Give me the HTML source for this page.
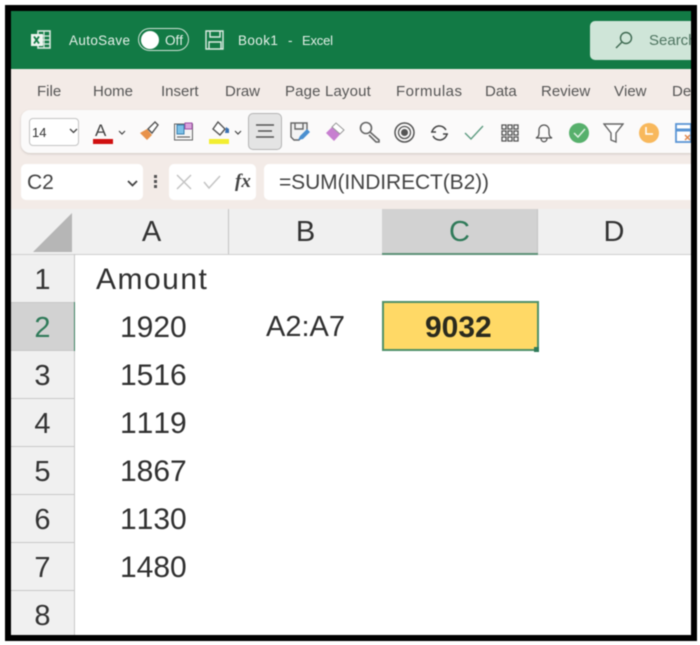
<!DOCTYPE html>
<html><head><meta charset="utf-8">
<style>
html,body{margin:0;padding:0;background:#fff}
#p{position:relative;width:700px;height:645px;overflow:hidden;background:#fff;font-family:"Liberation Sans",sans-serif;font-kerning:none;filter:blur(0.45px)}
#p div,#p span,#p svg{position:absolute}
.t{white-space:nowrap;line-height:1}
.m{font-size:15px;color:#555;top:84px}
.g{font-size:30px;color:#303030;line-height:1;white-space:nowrap}
.rh{left:11px;width:63px;height:47px;background:#f0f0f0;border-bottom:1px solid #c8c8c8;text-align:center;font-size:29px;line-height:50px;color:#333}
.ch{top:209px;height:45px;background:#f0f0f0;text-align:center;font-size:29px;line-height:46px;color:#333}
</style></head><body>
<div id="p">
<!-- green title bar -->
<div style="left:11px;top:11px;width:680px;height:58px;background:#127a45"></div>
<!-- ribbon bg -->
<div style="left:11px;top:69px;width:680px;height:141px;background:#f3ebe7"></div>

<svg style="left:30px;top:30px" width="22" height="20" viewBox="0 0 22 20"><rect x="8" y="1" width="12" height="17" fill="none" stroke="#d8e8de" stroke-width="1.6"/><path d="M14 1v17M8 6h12M8 10h12M8 14h12" stroke="#d8e8de" stroke-width="1.2"/><rect x="1" y="4" width="12" height="12" fill="#eef5f0"/><path d="M4 6.500l5 7M9 6.500l-5 7" stroke="#127a45" stroke-width="1.800"/></svg>
<span class="t" style="left:69px;top:34px;font-size:13.5px;color:#e4f0e8;letter-spacing:.35px">AutoSave</span>
<div style="left:138px;top:28px;width:51px;height:23px;border:1px solid #cfe3d6;border-radius:13px;box-sizing:border-box"></div>
<div style="left:141px;top:31px;width:18px;height:18px;background:#fff;border-radius:50%"></div>
<span class="t" style="left:165px;top:34px;font-size:13.5px;color:#e4f0e8">Off</span>
<svg style="left:204px;top:29px" width="22" height="22" viewBox="0 0 22 22" fill="none" stroke="#dcebe2" stroke-width="1.400"><path d="M2 2h17v18H2zM6 2v6h10V2M5 20v-7h12v7"/></svg>
<span class="t" style="left:238px;top:34px;font-size:13.5px;color:#e4f0e8;letter-spacing:.4px">Book1</span>
<span class="t" style="left:288px;top:34px;font-size:13.5px;color:#e4f0e8">-</span>
<span class="t" style="left:302px;top:34px;font-size:13px;color:#e4f0e8;letter-spacing:-.2px">Excel</span>
<div style="left:590px;top:21px;width:101px;height:39px;background:#cfe5d8;border-radius:5px 0 0 5px"></div>
<svg style="left:614px;top:30px" width="20" height="20" viewBox="0 0 20 20" fill="none" stroke="#3f6a52" stroke-width="1.400"><circle cx="12" cy="8" r="5.500"/><path d="M8 12l-6 6"/></svg>
<span class="t" style="left:649px;top:33px;font-size:15px;color:#4f7561;width:42px;overflow:hidden;display:block">Search</span>

<!-- tabs -->
<span class="t m" style="left:37px">File</span>
<span class="t m" style="left:93px">Home</span>
<span class="t m" style="left:161px">Insert</span>
<span class="t m" style="left:225px">Draw</span>
<span class="t m" style="left:285px;letter-spacing:.15px">Page Layout</span>
<span class="t m" style="left:396px;letter-spacing:.5px">Formulas</span>
<span class="t m" style="left:485px">Data</span>
<span class="t m" style="left:541px">Review</span>
<span class="t m" style="left:614px">View</span>
<span class="t m" style="left:672px;width:19px;overflow:hidden;display:block">Developer</span>

<!-- toolbar -->
<div style="left:21px;top:110px;width:670px;height:43px;background:#fbfafa;border-radius:9px 0 0 9px;box-shadow:0 1px 2px #cfc8c4"></div>
<div style="left:29px;top:118px;width:50px;height:28px;border:1px solid #c4c4c4;border-radius:4px;background:#fff;box-sizing:border-box"></div>
<span class="t" style="left:32px;top:126px;font-size:13px;color:#333">14</span>
<svg style="left:69px;top:128px" width="9" height="6" viewBox="0 0 9 6" fill="none" stroke="#444" stroke-width="1.300"><path d="M1 1l3.500 3.500L8 1"/></svg>
<span class="t" style="left:95px;top:122px;font-size:17px;color:#444">A</span>
<div style="left:93px;top:139px;width:20px;height:5px;background:#d01010"></div>
<svg style="left:118px;top:130px" width="8" height="6" viewBox="0 0 8 6" fill="none" stroke="#444" stroke-width="1.200"><path d="M1 1l3 3 3-3"/></svg>
<svg style="left:139px;top:120px" width="20" height="22" viewBox="0 0 20 22"><path d="M1 13l7-4 5 6-5 5z" fill="#e8924a"/><path d="M9 9l7-7 3 3-6 8z" fill="#fff" stroke="#555" stroke-width="1.400"/></svg>
<svg style="left:173px;top:122px" width="22" height="20" viewBox="0 0 22 20"><rect x="1.500" y="2" width="18" height="16" fill="#f4f4f4" stroke="#666"/><rect x="4" y="3" width="7" height="9" fill="#7cc0e8" stroke="#3a80b0"/><rect x="12" y="1" width="7" height="6" fill="#dba4dc" stroke="#a050a8"/><path d="M4 15h13" stroke="#555"/></svg>
<svg style="left:211px;top:121px" width="20" height="17" viewBox="0 0 20 17"><path d="M7 1l7 7-5 6-7-6z" fill="#fff" stroke="#555" stroke-width="1.400"/><path d="M15 6l3 2v4h-4z" fill="#3a70b0"/></svg>
<div style="left:209px;top:139px;width:20px;height:5px;background:#f2ee30"></div>
<svg style="left:234px;top:130px" width="8" height="6" viewBox="0 0 8 6" fill="none" stroke="#444" stroke-width="1.200"><path d="M1 1l3 3 3-3"/></svg>
<div style="left:248px;top:113px;width:34px;height:37px;background:#e4e4e4;border:1px solid #b4b4b4;border-radius:5px;box-sizing:border-box"></div>
<svg style="left:255px;top:123px" width="20" height="17" viewBox="0 0 20 17" stroke="#555" stroke-width="1.500"><path d="M1 2h18M3 8h14M1 14h18"/></svg>
<svg style="left:289px;top:121px" width="22" height="22" viewBox="0 0 22 22"><path d="M2 2h16v8l-8 9H5l-3-3z" fill="#f4f4f4" stroke="#666" stroke-width="1.400"/><path d="M6 2v6h8V2" fill="none" stroke="#666" stroke-width="1.400"/><path d="M9 19l2-4 7-7 3 3-7 7z" fill="#4a8fd0"/></svg>
<svg style="left:325px;top:122px" width="20" height="20" viewBox="0 0 20 20"><path d="M1 11l10-10 8 7-10 11z" fill="#c77fd0"/><path d="M7 5l4-4 8 7-4 4z" fill="#fff" stroke="#999"/></svg>
<svg style="left:359px;top:121px" width="22" height="22" viewBox="0 0 22 22" fill="none" stroke="#666" stroke-width="1.600"><circle cx="7" cy="7" r="5.500"/><path d="M11 11l9 8v2h-3l-7-7"/></svg>
<svg style="left:394px;top:122px" width="21" height="21" viewBox="0 0 21 21" fill="none" stroke="#555"><circle cx="10.500" cy="10.500" r="9.500" stroke-width="1.500"/><circle cx="10.500" cy="10.500" r="6" stroke-width="1.300"/><circle cx="10.500" cy="10.500" r="3" fill="#555"/></svg>
<svg style="left:430px;top:124px" width="19" height="18" viewBox="0 0 19 18" fill="none" stroke="#444" stroke-width="1.500"><path d="M2 8a7.500 7.500 0 0 1 14-2M17 10a7.500 7.500 0 0 1-14 2"/><path d="M1 8h5M13 10h5"/></svg>
<svg style="left:464px;top:125px" width="20" height="16" viewBox="0 0 20 16" fill="none" stroke="#5f9c82" stroke-width="1.400"><path d="M1 8l6 6L19 1"/></svg>
<svg style="left:501px;top:124px" width="18" height="18" viewBox="0 0 18 18" fill="#fff" stroke="#555" stroke-width="1.300"><path d="M1 1h4v4H1zM7 1h4v4H7zM13 1h4v4h-4zM1 7h4v4H1zM7 7h4v4H7zM13 7h4v4h-4zM1 13h4v4H1zM7 13h4v4H7zM13 13h4v4h-4z"/></svg>
<svg style="left:535px;top:123px" width="18" height="20" viewBox="0 0 18 20" fill="none" stroke="#555" stroke-width="1.300"><path d="M1 15c2-1 3-2 3-5V7a5 5 0 0 1 10 0v3c0 3 1 4 3 5zM6 15c0 5 6 5 6 0"/></svg>
<div style="left:569px;top:123px;width:20px;height:20px;background:#57b06c;border-radius:50%"></div>
<svg style="left:573px;top:128px" width="13" height="10" viewBox="0 0 13 10" fill="none" stroke="#dff0e2" stroke-width="1.500"><path d="M1 5l4 4 7-8"/></svg>
<svg style="left:603px;top:123px" width="21" height="21" viewBox="0 0 21 21" fill="#fff" stroke="#666" stroke-width="1.400"><path d="M1 1h19l-7 9v9l-5-2v-7z"/></svg>
<div style="left:639px;top:123px;width:20px;height:20px;background:#f8b85c;border-radius:50%"></div>
<svg style="left:643px;top:127px" width="11" height="10" viewBox="0 0 11 10" fill="none" stroke="#fff" stroke-width="1.500"><path d="M3 0v7h7"/></svg>
<svg style="left:675px;top:123px" width="16" height="20" viewBox="0 0 16 20"><rect x="1" y="1" width="15" height="18" fill="#fff" stroke="#5a95d5" stroke-width="1.800"/><path d="M1 7h15" stroke="#5a95d5" stroke-width="3"/><path d="M10 12l5 5M15 12l-5 5" stroke="#e08a50" stroke-width="1.500"/></svg>

<!-- formula bar -->
<div style="left:21px;top:164px;width:122px;height:36px;background:#fff;border-radius:5px"></div>
<span class="t" style="left:27px;top:172px;font-size:21px;color:#444">C2</span>
<svg style="left:127px;top:180px" width="11" height="7" viewBox="0 0 11 7" fill="none" stroke="#444" stroke-width="1.800"><path d="M1 1l4.500 4.500L10 1"/></svg>
<svg style="left:153px;top:174px" width="5" height="16" viewBox="0 0 5 16" fill="#555"><rect x="1" y="1" width="3" height="3"/><rect x="1" y="6" width="3" height="3"/><rect x="1" y="11" width="3" height="3"/></svg>
<div style="left:169px;top:164px;width:87px;height:36px;background:#fff;border-radius:5px"></div>
<svg style="left:176px;top:174px" width="16" height="16" viewBox="0 0 16 16" stroke="#c4c4c4" stroke-width="1.500"><path d="M1 1l14 14M15 1L1 15"/></svg>
<svg style="left:203px;top:175px" width="18" height="14" viewBox="0 0 18 14" fill="none" stroke="#c4c4c4" stroke-width="1.500"><path d="M1 7l5 6L17 1"/></svg>
<span class="t" style="left:235px;top:172px;font-size:19px;font-style:italic;font-family:'Liberation Serif',serif;color:#444;font-weight:bold">fx</span>
<div style="left:264px;top:164px;width:427px;height:36px;background:#fff;border-radius:5px 0 0 5px"></div>
<span class="t" style="left:279px;top:172px;font-size:21px;color:#444;letter-spacing:-.1px">=SUM(INDIRECT(B2))</span>

<!-- grid -->
<div style="left:11px;top:209px;width:680px;height:427px;background:#fff"></div>
<div style="left:11px;top:209px;width:64px;height:45px;background:#f0f0f0"></div>
<svg style="left:33px;top:213px" width="40" height="40" viewBox="0 0 40 40"><path d="M39 0v39H0z" fill="#b6b6b6"/></svg>
<div class="ch" style="left:75px;width:153px">A</div>
<div class="ch" style="left:229px;width:153px">B</div>
<div class="ch" style="left:382px;width:155px;background:#d2d2d2;color:#2f7a59">C</div>
<div class="ch" style="left:537px;width:154px">D</div>
<div style="left:228px;top:209px;width:1px;height:45px;background:#c4c4c4"></div>
<div style="left:537px;top:209px;width:1px;height:45px;background:#c4c4c4"></div>
<div style="left:11px;top:254px;width:680px;height:1px;background:#cfcfcf"></div>
<div style="left:382px;top:253px;width:156px;height:2px;background:#5d9278"></div>

<div class="rh" style="top:255px">1</div>
<div class="rh" style="top:303px;background:#d2d2d2;color:#2f7a59">2</div>
<div class="rh" style="top:351px">3</div>
<div class="rh" style="top:399px">4</div>
<div class="rh" style="top:447px">5</div>
<div class="rh" style="top:495px">6</div>
<div class="rh" style="top:543px">7</div>
<div class="rh" style="top:591px;height:44px;border-bottom:0">8</div>
<div style="left:74px;top:254px;width:1px;height:382px;background:#c8c8c8"></div>
<div style="left:74px;top:302px;width:1px;height:49px;background:#3e8262"></div>

<span class="g" style="left:96px;top:265px;letter-spacing:1.500px">Amount</span>
<span class="g" style="left:120px;top:313px">1920</span>
<span class="g" style="left:120px;top:361px">1516</span>
<span class="g" style="left:120px;top:409px">1119</span>
<span class="g" style="left:120px;top:457px">1867</span>
<span class="g" style="left:120px;top:505px">1130</span>
<span class="g" style="left:120px;top:553px">1480</span>
<span class="g" style="left:266px;top:313px;font-size:29px">A2:A7</span>

<div style="left:382px;top:301px;width:157px;height:50px;background:#ffd966;border:2px solid #4f9168;box-sizing:border-box"></div>
<div style="left:534px;top:347px;width:5px;height:5px;background:#2f7a59"></div>
<span class="g" style="left:425px;top:313px;font-weight:bold;color:#2a2a1e">9032</span>

<!-- black frame -->
<div style="left:5px;top:5px;width:692px;height:636px;border:6px solid #000;box-sizing:border-box"></div>
</div>
</body></html>
